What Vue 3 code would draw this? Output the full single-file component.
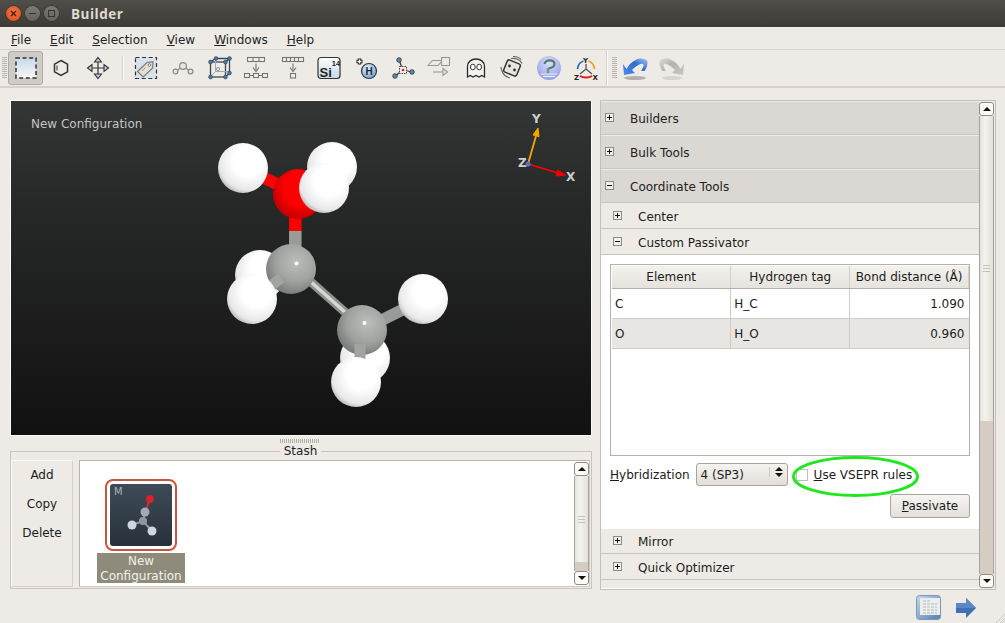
<template>
  <div class="window">
    <header class="titlebar">
      <span class="wm wm--close">
        <svg width="7" height="7" viewBox="0 0 7 7"><path d="M1 1l5 5M6 1L1 6" stroke="#4a1c08" stroke-width="1.3" /></svg>
      </span>
      <span class="wm"><i class="wm__min" /></span>
      <span class="wm"><i class="wm__max" /></span>
      <span class="titlebar__name">Builder</span>
    </header>

    <nav class="menubar">
      <span v-for="m in menus" :key="m.label" class="menubar__item"><u>{{ m.label[0] }}</u>{{ m.label.slice(1) }}</span>
    </nav>

    <div class="toolbar">
      <i class="grip" />
      <span class="tool tool--on">
        <svg width="24" height="24" viewBox="0 0 24 24">
          <defs><linearGradient id="sel" x1="0" y1="0" x2="0" y2="1"><stop offset="0" stop-color="#c9d9ea" /><stop offset="1" stop-color="#f7f7f5" /></linearGradient></defs>
          <rect x="2" y="2" width="20" height="20" fill="url(#sel)" stroke="#333" stroke-width="1.5" stroke-dasharray="4 2.6" />
        </svg>
      </span>
      <span class="tool">
        <svg width="24" height="24" viewBox="0 0 24 24"><path d="M12 4.500l6.500 3.700v7.600L12 19.500l-6.500-3.700V8.200z" fill="none" stroke="#333" stroke-width="1.500" /><path d="M8 9.500v5" stroke="#555" stroke-width="1.200" /></svg>
      </span>
      <span class="tool">
        <svg width="24" height="24" viewBox="0 0 24 24">
          <path d="M12 5v14M5 12h14" stroke="#333" stroke-width="1.200" />
          <path d="M12 1.500l3.500 4.500h-7zM12 22.500l3.500-4.500h-7zM1.500 12L6 8.500v7zM22.500 12L18 8.500v7z" fill="#b9cde0" stroke="#333" stroke-width="1.100" />
        </svg>
      </span>
      <i class="sep" />
      <span class="tool">
        <svg width="24" height="24" viewBox="0 0 24 24">
          <rect x="1.500" y="1.500" width="21" height="21" fill="#d6e2ee" stroke="#333" stroke-dasharray="4 2.600" stroke-width="1.200" />
          <path d="M3.500 15.500L13 6.500l6-.8-.3 6.300-9.500 9z" fill="#e8e0d2" stroke="#777" stroke-width="1.100" />
          <circle cx="15.500" cy="9" r="1.300" fill="#fff" stroke="#777" />
          <path d="M8 15l3.500-3.300" stroke="#999" />
        </svg>
      </span>
      <span class="tool">
        <svg width="24" height="24" viewBox="0 0 24 24" fill="none" stroke="#8a8a86" stroke-width="1.200">
          <path d="M6 14.500l3.500-2.500M14.500 12l3.500 2.500" />
          <circle cx="12" cy="10" r="3.400" fill="#e9e6e1" /><circle cx="4.500" cy="15.500" r="2.400" fill="#e9e6e1" /><circle cx="19.500" cy="15.500" r="2.400" fill="#e9e6e1" />
        </svg>
      </span>
      <span class="tool">
        <svg width="24" height="24" viewBox="0 0 24 24">
          <g fill="none" stroke="#3b4754" stroke-width="1.300"><rect x="2.500" y="6" width="15" height="15" /><path d="M2.500 6l5-3.500H21.500V17l-4 4M17.500 6l4-3.500" /></g>
          <path d="M7.500 3v12.500l-5 5M7.500 15.500h14" stroke="#a4a9ae" fill="none" />
          <g fill="#4a7aa8" stroke="#2a3f55" stroke-width=".6"><circle cx="2.500" cy="6" r="1.900" /><circle cx="2.500" cy="21" r="1.900" /><circle cx="17.500" cy="21" r="1.900" /><circle cx="17.500" cy="6" r="1.900" /><circle cx="8" cy="2.500" r="1.900" /><circle cx="21.500" cy="2.500" r="1.900" /><circle cx="21.500" cy="17" r="1.900" /></g>
          <circle cx="10" cy="13" r="1.600" fill="none" stroke="#8b98a5" />
        </svg>
      </span>
      <span class="tool">
        <svg width="24" height="24" viewBox="0 0 24 24" fill="#f1efeb" stroke="#77756f" stroke-width="1.100">
          <rect x="3.500" y="1.500" width="17" height="4" /><path d="M9 1.500v4M15 1.500v4" />
          <path d="M12 7.500v7" fill="none" /><path d="M9 11.500l3 4 3-4" fill="none" />
          <rect x=".5" y="17.500" width="5" height="4" /><rect x="9.500" y="17.500" width="5" height="4" /><rect x="18.500" y="17.500" width="5" height="4" />
          <path d="M5.500 19.500h4M14.500 19.500h4" fill="none" />
        </svg>
      </span>
      <span class="tool">
        <svg width="24" height="24" viewBox="0 0 24 24" fill="#f1efeb" stroke="#77756f" stroke-width="1.100">
          <rect x="1.500" y="1.500" width="21" height="4" /><path d="M5.500 1.500v4M9.500 1.500v4M13.500 1.500v4M17.500 1.500v4" />
          <path d="M12 7.500v7" fill="none" /><path d="M9 11.500l3 4 3-4" fill="none" />
          <rect x="9.500" y="17.500" width="5" height="4.500" />
        </svg>
      </span>
      <span class="tool">
        <svg width="24" height="24" viewBox="0 0 24 24">
          <defs><linearGradient id="si" x1="0" y1="0" x2="0" y2="1"><stop offset="0" stop-color="#fff" /><stop offset="1" stop-color="#c5d8ea" /></linearGradient></defs>
          <rect x="1" y="1.500" width="22" height="21" rx="3" fill="url(#si)" stroke="#333" stroke-width="1.200" />
          <text x="2.500" y="20.500" class="si-sym">Si</text><text x="14.800" y="9.500" class="si-num">14</text>
        </svg>
      </span>
      <span class="tool">
        <svg width="24" height="24" viewBox="0 0 24 24">
          <defs><radialGradient id="hball" cx=".4" cy=".3" r=".8"><stop offset="0" stop-color="#e4eef8" /><stop offset="1" stop-color="#6d9ac6" /></radialGradient></defs>
          <circle cx="15" cy="15" r="7.500" fill="url(#hball)" stroke="#26384b" stroke-width="1.200" />
          <text x="11.500" y="19" class="h-sym">H</text>
          <path d="M5.500 2.500v6M2.500 5.500h6" stroke="#222" stroke-width="3.400" /><path d="M5.500 3.500v4M3.500 5.500h4" stroke="#fff" stroke-width="1.400" />
        </svg>
      </span>
      <span class="tool">
        <svg width="24" height="24" viewBox="0 0 24 24">
          <path d="M12 14L8 4M12 14L4 20M12 14l9 2" stroke="#333" stroke-width="1.200" />
          <g fill="#5d86ad" stroke="#25384a" stroke-width=".8"><circle cx="8" cy="4" r="2.300" /><circle cx="4" cy="20" r="2.300" /><circle cx="21" cy="16" r="2.300" /></g>
          <rect x="8.500" y="10.500" width="7" height="7" fill="#eee" stroke="#444" stroke-dasharray="1.500 1" /><circle cx="12" cy="14" r="1.300" fill="#d22" />
        </svg>
      </span>
      <span class="tool">
        <svg width="24" height="24" viewBox="0 0 24 24" fill="#eeebe6" stroke="#9a9893" stroke-width="1.100">
          <path d="M1 9.500l4.500-5h10l-4.500 5z" /><rect x="14.500" y="1.500" width="8" height="8" />
          <path d="M6 16h11" fill="none" /><path d="M16 12.500l4.500 3.500-4.500 3.500z" />
        </svg>
      </span>
      <span class="tool">
        <svg width="24" height="24" viewBox="0 0 24 24">
          <path d="M3.500 21V10.500c0-10 17-10 17 0V21l-2.800-1.600L15 21l-3-1.600L9 21l-2.700-1.600z" fill="#f3f1ed" stroke="#2a2a2a" stroke-width="1.300" />
          <ellipse cx="8.800" cy="11" rx="2.400" ry="2.800" fill="#fff" stroke="#333" /><ellipse cx="15.200" cy="11" rx="2.400" ry="2.800" fill="#fff" stroke="#333" />
        </svg>
      </span>
      <span class="tool">
        <svg width="24" height="24" viewBox="0 0 24 24">
          <path d="M11 2.500c4-.5 9 1 11 5M13 .5c3 0 6 1 8 3M2 15c1 3 4 6 8 7M1 11c0 2 .5 3 1 4" fill="none" stroke="#666" stroke-width="1.200" />
          <rect x="5" y="5.500" width="14" height="13" rx="2" fill="#e7e5e1" stroke="#333" stroke-width="1.500" transform="rotate(22 12 12)" />
          <circle cx="9.500" cy="10" r="1.400" fill="#333" /><circle cx="14.500" cy="14" r="1.400" fill="#333" />
        </svg>
      </span>
      <span class="tool">
        <svg width="24" height="24" viewBox="0 0 24 24">
          <defs><radialGradient id="pball" cx=".5" cy=".3" r=".75"><stop offset="0" stop-color="#dedcf6" /><stop offset="1" stop-color="#8f9be8" /></radialGradient></defs>
          <circle cx="12" cy="12" r="12" fill="url(#pball)" />
          <path d="M7.500 8c1-4.500 10-5 10 0 0 3.500-4 4-6 4.500" fill="none" stroke="#4e7f72" stroke-width="2.200" />
          <path d="M11 12v6" stroke="#6e9a8a" stroke-width="2.500" />
          <path d="M4 18h16M6 20.500h12" stroke="#f0f0ff" stroke-width="1.200" />
        </svg>
      </span>
      <span class="tool">
        <svg width="24" height="24" viewBox="0 0 24 24">
          <path d="M12 8v5M12 13l-6 5M12 13l6 5" stroke="#555" stroke-width="1.300" />
          <path d="M9.500 5C6 6 4 9 3.500 13" fill="none" stroke="#2f6fd0" stroke-width="1.800" /><path d="M14.500 5c3.500 1 5.500 4 6 8" fill="none" stroke="#f0a020" stroke-width="1.800" />
          <path d="M6 20c3 2 9 2 12 0" fill="none" stroke="#e01818" stroke-width="1.800" />
          <text x="9" y="7" class="xyz">Y</text><text x="0" y="23.500" class="xyz">Z</text><text x="18.500" y="23.500" class="xyz">X</text>
        </svg>
      </span>
      <i class="sep sep--wide" />
      <i class="grip grip--mid" />
      <span class="tool">
        <svg width="26" height="26" viewBox="0 0 26 26">
          <defs><linearGradient id="undo" x1="0" y1="1" x2="1" y2="0"><stop offset="0" stop-color="#4c8cf0" /><stop offset=".6" stop-color="#2f6ccc" /><stop offset="1" stop-color="#b4cdf0" /></linearGradient></defs>
          <ellipse cx="13" cy="23" rx="11" ry="2" fill="#b3b1ac" />
          <path d="M1 9l1 11 11-2-3-3c4-4 9-7 11-6 1.500 1 0 4-2 7h3.500c2.500-3 3.500-7 3-10-3-3-8-3-12-1-4 2-7 5-9 9z" fill="url(#undo)" />
        </svg>
      </span>
      <span class="tool">
        <svg width="26" height="26" viewBox="0 0 26 26">
          <defs><linearGradient id="redo" x1="1" y1="1" x2="0" y2="0"><stop offset="0" stop-color="#c8c6c1" /><stop offset=".6" stop-color="#b5b3ae" /><stop offset="1" stop-color="#e2e0db" /></linearGradient></defs>
          <ellipse cx="13" cy="23" rx="10" ry="2" fill="#d6d4cf" />
          <path d="M25 9l-1 11-11-2 3-3c-4-4-9-7-11-6-1.500 1 0 4 2 7H3.500C1 13 0 9 .5 6c3-3 8-3 12-1 4 2 7 5 9 9z" fill="url(#redo)" />
        </svg>
      </span>
    </div>

    <main class="main">
      <section class="left">
        <div class="viewer">
          <span class="viewer__name">New Configuration</span>
          <svg class="viewer__scene" width="580" height="334" viewBox="0 0 580 334">
            <defs>
              <radialGradient id="ballH" cx=".6" cy=".36" r=".74"><stop offset=".4" stop-color="#fff" /><stop offset=".78" stop-color="#e8e8e8" /><stop offset="1" stop-color="#9c9c9c" /></radialGradient>
              <radialGradient id="ballO" cx=".58" cy=".38" r=".68"><stop offset=".5" stop-color="#ff0000" /><stop offset="1" stop-color="#b80000" /></radialGradient>
              <radialGradient id="ballC" cx=".6" cy=".36" r=".72"><stop offset="0" stop-color="#bcbebc" /><stop offset=".55" stop-color="#a0a2a0" /><stop offset="1" stop-color="#707270" /></radialGradient>
            </defs>
            <path d="M232 67l55 26" stroke="#f00" stroke-width="12" />
            <path d="M284.300 93v37" stroke="#f00" stroke-width="12.500" />
            <path d="M284.300 130v20" stroke="#9a9c9a" stroke-width="12.500" />
            <path d="M351 229l62-31" stroke="#999b99" stroke-width="12" />
            <circle cx="232" cy="67" r="25" fill="url(#ballH)" />
            <circle cx="321" cy="66" r="25" fill="url(#ballH)" />
            <circle cx="287" cy="93" r="25" fill="url(#ballO)" />
            <circle cx="313" cy="87" r="25" fill="url(#ballH)" />
            <circle cx="249" cy="174" r="25" fill="url(#ballH)" />
            <path d="M300 181l52 46" stroke="#8f918f" stroke-width="9" />
            <path d="M300 181l52 46" stroke="#d8d8d2" stroke-width="3.500" />
            <circle cx="280" cy="168" r="25" fill="url(#ballC)" />
            <circle cx="285.500" cy="162.500" r="2" fill="#fffef0" />
            <path d="M270 177l-14 11" stroke="#a2a4a2" stroke-width="11" />
            <circle cx="241" cy="198" r="25" fill="url(#ballH)" />
            <circle cx="354" cy="257" r="25" fill="url(#ballH)" />
            <circle cx="351" cy="229" r="25" fill="url(#ballC)" />
            <circle cx="353.500" cy="222" r="2" fill="#fffef0" />
            <path d="M349 243v17" stroke="#a2a4a2" stroke-width="11" />
            <circle cx="412" cy="198" r="25" fill="url(#ballH)" />
            <circle cx="345" cy="281" r="25" fill="url(#ballH)" />

            <path d="M517 63l8-28" stroke="#f5a800" stroke-width="1.800" /><path d="M527 27l-5 7 6 1.600z" fill="#f5a800" stroke="#f5a800" />
            <path d="M517 63l30 9" stroke="#f00" stroke-width="1.800" /><path d="M555 74l-8.500-5-1.500 6z" fill="#e00" stroke="#e00" />
            <circle cx="517" cy="63" r="2.600" fill="#4a72d8" />
            <text x="521" y="22" class="axis">Y</text><text x="555" y="80" class="axis">X</text><text x="507" y="66" class="axis">Z</text>
          </svg>
        </div>

        <div class="splitter"><i class="splitter__dots" /></div>

        <fieldset class="stash">
          <legend class="stash__title">Stash</legend>
          <div class="stash__actions">
            <span>Add</span><span>Copy</span><span>Delete</span>
          </div>
          <div class="stash__list">
            <div class="config">
              <div class="config__frame">
                <div class="config__thumb">
                  <span class="config__mark">M</span>
                  <svg width="62" height="62" viewBox="0 0 62 62">
                    <path d="M35 28l-2 9-11 4M33 37l9 10" stroke="#8e98a0" stroke-width="2" fill="none" />
                    <path d="M39 17l-3 9" stroke="#c33" stroke-width="2" />
                    <circle cx="40" cy="15" r="4" fill="#d8202f" />
                    <circle cx="33" cy="37" r="4" fill="#8f98a0" /><circle cx="35" cy="28" r="4.500" fill="#a2abb2" />
                    <circle cx="22" cy="41" r="4.500" fill="#cfd6de" /><circle cx="42" cy="47" r="4.500" fill="#cfd6de" />
                  </svg>
                </div>
              </div>
              <div class="config__label">New<br>Configuration</div>
            </div>
            <div class="vscroll vscroll--stash">
              <span class="vscroll__btn"><i class="tri tri--up" /></span>
              <span class="vscroll__thumb"><i class="vscroll__lines" /></span>
              <span class="vscroll__track" />
              <span class="vscroll__btn"><i class="tri tri--down" /></span>
            </div>
          </div>
        </fieldset>
      </section>

      <aside class="side">
        <div class="side__scroll">
          <div v-for="s in topSections" :key="s.label" class="head">
            <span class="box" :class="{ 'box--open': s.open }" />{{ s.label }}
          </div>
          <div class="sub"><span class="box" />Center</div>
          <div class="sub"><span class="box box--open" />Custom Passivator</div>

          <div class="panel">
            <div class="tablebox">
              <table class="grid">
                <thead>
                  <tr><th>Element</th><th>Hydrogen tag</th><th>Bond distance (Å)</th></tr>
                </thead>
                <tbody>
                  <tr v-for="r in rows" :key="r.el">
                    <td>{{ r.el }}</td><td>{{ r.tag }}</td><td class="num">{{ r.dist }}</td>
                  </tr>
                </tbody>
              </table>
            </div>
            <div class="form">
              <span><u>H</u>ybridization</span>
              <span class="combo">
                4 (SP3)
                <span class="combo__arrows"><i class="tri tri--up" /><i class="tri tri--down" /></span>
              </span>
              <span class="check"><i class="check__box" /><u>U</u>se VSEPR rules</span>
            </div>
            <div class="actions"><button class="btn"><u>P</u>assivate</button></div>
            <svg class="ring" width="133" height="45" viewBox="0 0 133 45"><ellipse cx="66.500" cy="22.500" rx="62" ry="19" fill="none" stroke="#1fe81f" stroke-width="3" /></svg>
          </div>

          <div class="sub sub--mirror"><span class="box" />Mirror</div>
          <div class="sub"><span class="box" />Quick Optimizer</div>
          <div class="cutoff" />
        </div>
        <div class="vscroll vscroll--side">
          <span class="vscroll__btn"><i class="tri tri--up" /></span>
          <span class="vscroll__thumb"><i class="vscroll__lines" /></span>
          <span class="vscroll__track" />
          <span class="vscroll__btn"><i class="tri tri--down" /></span>
        </div>
      </aside>
    </main>

    <footer class="status">
      <svg width="25" height="25" viewBox="0 0 25 25">
        <defs><linearGradient id="doc" x1="0" y1="0" x2="1" y2="1"><stop offset="0" stop-color="#c9d8e8" /><stop offset="1" stop-color="#4f7fb2" /></linearGradient></defs>
        <rect x=".5" y=".5" width="24" height="24" rx="3" fill="url(#doc)" stroke="#7f98b2" />
        <rect x="4" y="3" width="20" height="17" fill="#eceeee" />
        <path d="M7 6h7M7 9h14M7 12h14M7 15h14M7 18h14" stroke="#b3b9be" stroke-dasharray="3 1" />
      </svg>
      <svg class="status__arrow" width="20" height="20" viewBox="0 0 20 20">
        <path d="M0 5h10V0l10 10-10 10v-5H0z" fill="#3f70b4" />
        <path d="M0 5h10V0l10 10H0z" fill="#5a88c4" />
      </svg>
      <svg class="status__size" width="10" height="10" viewBox="0 0 10 10"><path d="M10 1L1 10M10 5l-5 5M10 8l-2 2" stroke="#cfcbc4" /></svg>
    </footer>
  </div>
</template>

<script setup>
const menus = [
  { label: 'File' },
  { label: 'Edit' },
  { label: 'Selection' },
  { label: 'View' },
  { label: 'Windows' },
  { label: 'Help' },
]

const topSections = [
  { label: 'Builders', open: false },
  { label: 'Bulk Tools', open: false },
  { label: 'Coordinate Tools', open: true },
]

const rows = [
  { el: 'C', tag: 'H_C', dist: '1.090' },
  { el: 'O', tag: 'H_O', dist: '0.960' },
]
</script>

<style scoped>
.window {
  display: flex;
  flex-direction: column;
  width: 1005px;
  height: 623px;
  overflow: hidden;
  background: #eeebe6;
  color: #1c1c1c;
  font-family: "DejaVu Sans", sans-serif;
  font-size: 12px;
}

.titlebar {
  display: flex;
  align-items: center;
  flex: 0 0 27px;
  padding-left: 6px;
  gap: 4px;
  background: linear-gradient(to bottom, #504e48, #3c3b37);
}

.wm {
  display: flex;
  align-items: center;
  justify-content: center;
  width: 15px;
  height: 15px;
  border-radius: 50%;
  background: linear-gradient(to bottom, #7c7a72, #65635b);
  box-shadow: 0 0 0 .5px #2f2e2a;
}

.wm--close {
  background: radial-gradient(circle at 50% 40%, #f07746, #dd4814);
}

.wm__min {
  width: 7px;
  height: 1px;
  background: #35342f;
}

.wm__max {
  width: 7px;
  height: 7px;
  border: 1px solid #35342f;
  box-sizing: border-box;
}

.titlebar__name {
  margin-left: 8px;
  color: #dfdbd2;
  font-family: "Open Sans", sans-serif;
  font-weight: 700;
  font-size: 13.500px;
  letter-spacing: .5px;
}

.menubar {
  display: flex;
  align-items: center;
  flex: 0 0 23px;
  padding: 3px 0 0 11px;
  gap: 19px;
  background: #eeebe6;
  border-bottom: 1px solid #d9d5ce;
  box-sizing: border-box;
}

.menubar__item {
  color: #222;
}

.toolbar {
  display: flex;
  align-items: center;
  flex: 0 0 38px;
  padding-left: 2px;
  background: #eeebe6;
  border-bottom: 2px solid #d5d1ca;
  box-sizing: border-box;
}

.grip {
  width: 5px;
  height: 22px;
  margin-right: 1px;
  background: repeating-linear-gradient(to bottom, #b8b5af 0 1px, transparent 1px 2px);
}

.grip--mid {
  height: 22px;
  margin: 0 0 0 2px;
}

.tool {
  display: flex;
  align-items: center;
  justify-content: center;
  flex: 0 0 36.600px;
  height: 34px;
}

.tool--on {
  flex-basis: 35px;
  background: #cfcbc5;
  border: 1px solid #aeaaa3;
  border-radius: 3px;
  box-sizing: border-box;
}

.sep {
  flex: 0 0 1px;
  height: 24px;
  margin: 0 5px 0 6px;
  background: #d5d1ca;
  box-shadow: 1px 0 0 #fbfaf8;
}

.sep--wide {
  height: 36px;
  margin: 0 3px 0 2px;
}

.si-sym {
  font-family: "Liberation Sans", sans-serif;
  font-weight: 700;
  font-size: 13px;
  fill: #222;
}

.si-num {
  font-family: "Liberation Sans", sans-serif;
  font-weight: 700;
  font-size: 7.500px;
  fill: #222;
}

.h-sym {
  font-family: "Liberation Sans", sans-serif;
  font-weight: 700;
  font-size: 10px;
  fill: #16283a;
}

.xyz {
  font-family: "DejaVu Sans", sans-serif;
  font-weight: 700;
  font-size: 7px;
  fill: #222;
}

.main {
  display: flex;
  flex: 0 0 502px;
  padding: 12px 9px 0 10px;
  gap: 8px;
  box-sizing: border-box;
}

.left {
  display: flex;
  flex-direction: column;
  flex: 0 0 582px;
  width: 582px;
}

.viewer {
  position: relative;
  flex: 0 0 336px;
  box-sizing: border-box;
  border: 1px solid #fbfaf8;
  background: linear-gradient(to bottom, #343635, #272928 30%, #111 100%);
}

.viewer__name {
  position: absolute;
  left: 20px;
  top: 16px;
  color: #c4c4c4;
}

.viewer__scene {
  position: absolute;
  inset: 0;
}

.axis {
  font-family: "DejaVu Sans", sans-serif;
  font-weight: 700;
  font-size: 12px;
  fill: #cfcfcf;
}

.splitter {
  display: flex;
  justify-content: center;
  flex: 0 0 9px;
  align-items: center;
}

.splitter__dots {
  width: 40px;
  height: 4px;
  margin-left: -2px;
  background: repeating-linear-gradient(to right, #b1aea8 0 1px, transparent 1px 2px);
}

.stash {
  display: flex;
  position: relative;
  flex: 0 0 144px;
  height: 144px;
  width: 582px;
  min-width: 0;
  margin: 0;
  padding: 3px 1px 1px 0;
  gap: 6px;
  box-sizing: border-box;
  border: 1px solid #c9c5be;
}

.stash__title {
  margin: 0 auto;
  padding: 0 4px;
  line-height: 12px;
  height: 12px;
  color: #222;
}

.stash__actions {
  display: flex;
  flex-direction: column;
  align-items: center;
  flex: 0 0 62px;
  height: 127px;
  gap: 14px;
  padding-top: 7px;
  box-sizing: border-box;
  border: 1px solid #d5d1ca;
  border-left-color: #fbfaf8;
  border-top-color: #fbfaf8;
  line-height: 15px;
}

.stash__list {
  display: flex;
  justify-content: space-between;
  flex: 1;
  height: 127px;
  box-sizing: border-box;
  background: #fff;
  border: 1px solid #cdc9c2;
  border-top-color: #b8b4ad;
  border-left-color: #b8b4ad;
  padding: 1px 0 1px 17px;
}

.config {
  display: flex;
  flex-direction: column;
  align-items: center;
  width: 88px;
  margin-top: 17px;
}

.config__frame {
  box-sizing: border-box;
  width: 72px;
  height: 72px;
  padding: 3px;
  border: 2px solid #c9553a;
  border-radius: 8px;
}

.config__thumb {
  position: relative;
  width: 62px;
  height: 62px;
  border-radius: 3px;
  background: linear-gradient(to bottom, #3e4b57, #27313b);
}

.config__mark {
  position: absolute;
  left: 4px;
  top: 2px;
  color: #aab3ba;
  font-size: 10px;
}

.config__label {
  box-sizing: border-box;
  width: 88px;
  height: 30px;
  margin-top: 2px;
  padding-top: 1px;
  background: #8f8b7b;
  color: #f3f1ea;
  font-size: 12px;
  line-height: 15px;
  text-align: center;
}

.vscroll {
  display: flex;
  flex-direction: column;
  flex: 0 0 15px;
  width: 15px;
  box-sizing: border-box;
  border-radius: 3px;
}

.vscroll--stash {
  height: 123px;
}

.vscroll--side {
  height: 486px;
}

.vscroll__btn {
  display: flex;
  align-items: center;
  justify-content: center;
  flex: 0 0 14px;
  box-sizing: border-box;
  background: #fbfaf8;
  border: 1px solid #8f8c86;
  border-radius: 3px;
}

.vscroll__thumb {
  display: flex;
  align-items: center;
  justify-content: center;
  box-sizing: border-box;
  border-left: 1px solid #a8a49d;
  border-right: 1px solid #a8a49d;
  background: linear-gradient(to right, #e6e3dd, #f5f3ef 40%, #e3dfd9);
}

.vscroll--stash .vscroll__thumb {
  flex: 0 0 86px;
}

.vscroll--side .vscroll__thumb {
  flex: 0 0 305px;
}

.vscroll__lines {
  width: 7px;
  height: 7px;
  background: repeating-linear-gradient(to bottom, #c6c2bb 0 1px, transparent 1px 3px);
}

.vscroll__track {
  flex: 1;
  box-sizing: border-box;
  border-left: 1px solid #a8a49d;
  border-right: 1px solid #a8a49d;
  background: #d5cdc3;
}

.tri {
  display: block;
  width: 0;
  height: 0;
  border-left: 4px solid transparent;
  border-right: 4px solid transparent;
}

.tri--up {
  border-bottom: 4px solid #111;
}

.tri--down {
  border-top: 4px solid #111;
}

.side {
  display: flex;
  flex: 0 0 396px;
  width: 396px;
  height: 490px;
  padding: 1px 1px 0 0;
  box-sizing: border-box;
  border: 1px solid #c5c1ba;
}

.side__scroll {
  flex: 0 0 378px;
  width: 378px;
  height: 488px;
  overflow: hidden;
}

.head {
  display: flex;
  align-items: center;
  height: 33px;
  margin-bottom: 1px;
  padding: 1px 0 0 4px;
  background: #dbd8d3;
  box-sizing: border-box;
  border-bottom: 1px solid #cbc7c0;
  color: #222;
}

.head:nth-child(3) {
  margin-bottom: 0;
}

.box {
  flex: 0 0 auto;
  width: 7px;
  height: 7px;
  margin: -3px 16px 0 0;
  border: 1px solid #8d8a84;
  background:
    linear-gradient(#111, #111) center / 5px 1px no-repeat,
    linear-gradient(#111, #111) center / 1px 5px no-repeat,
    #f2f0ec;
}

.box--open {
  background:
    linear-gradient(#111, #111) center / 5px 1px no-repeat,
    #f2f0ec;
}

.sub {
  display: flex;
  align-items: center;
  height: 26px;
  padding: 2px 0 0 12px;
  box-sizing: border-box;
  border-bottom: 1px solid #c9c5be;
  background: #eeebe6;
}

.sub--mirror {
  height: 25px;
}

.panel {
  position: relative;
  height: 274px;
  padding: 9px 9px 0;
  box-sizing: border-box;
  background: #fff;
}

.tablebox {
  height: 192px;
  padding: 1px;
  box-sizing: border-box;
  border: 1px solid #b5b1aa;
}

.grid {
  width: 357px;
  border-collapse: collapse;
  table-layout: fixed;
}

.grid th {
  height: 22px;
  padding: 1px 0 0;
  box-sizing: border-box;
  background: linear-gradient(to bottom, #f3f1ed, #e6e3de);
  border-bottom: 1px solid #b5b1aa;
  border-right: 1px solid #d5d1ca;
  font-weight: 400;
}

.grid td {
  height: 30px;
  padding: 1px 3px 0;
  box-sizing: border-box;
  border: 1px solid #cfccc6;
  border-left: 0;
}

.grid tr:nth-child(2) td {
  background: #e8e6e2;
}

.grid .num {
  text-align: right;
  border-right: 0;
  padding-right: 4px;
}

.form {
  display: flex;
  align-items: center;
  height: 24px;
  margin-top: 6px;
  padding-top: 1px;
  box-sizing: border-box;
}

.combo {
  position: relative;
  display: flex;
  align-items: center;
  box-sizing: border-box;
  width: 92px;
  height: 23px;
  margin-left: 6px;
  padding-left: 4px;
  border: 1px solid #a8a49d;
  border-radius: 3px;
  background: linear-gradient(to bottom, #f5f3ef, #e2dfd9);
}

.combo__arrows {
  position: absolute;
  right: 4px;
  top: 3px;
  display: flex;
  flex-direction: column;
  gap: 2px;
  padding-left: 5px;
  border-left: 1px solid #d0ccc5;
}

.check {
  display: flex;
  align-items: center;
  margin-left: 8px;
}

.check__box {
  box-sizing: border-box;
  width: 12px;
  height: 12px;
  margin-right: 6px;
  border: 1px solid #c2beb7;
  background: #fdfdfc;
}

.actions {
  display: flex;
  justify-content: flex-end;
  margin-top: 8px;
}

.btn {
  box-sizing: border-box;
  width: 80px;
  height: 24px;
  padding: 0;
  border: 1px solid #a8a49d;
  border-radius: 3px;
  background: linear-gradient(to bottom, #f7f5f2, #e3e0da);
  color: #1c1c1c;
  font: inherit;
}

.ring {
  position: absolute;
  left: 188px;
  top: 199px;
}

.cutoff {
  height: 9px;
  background: #eeebe6;
  border-bottom: 1px solid #fff;
  box-sizing: border-box;
}

.status {
  position: relative;
  display: flex;
  align-items: center;
  justify-content: flex-end;
  flex: 1;
  padding-right: 29px;
  gap: 15px;
  padding-top: 2px;
}

.status__size {
  position: absolute;
  right: 0;
  bottom: 0;
}
</style>

<style>
html,
body {
  margin: 0;
}
</style>
